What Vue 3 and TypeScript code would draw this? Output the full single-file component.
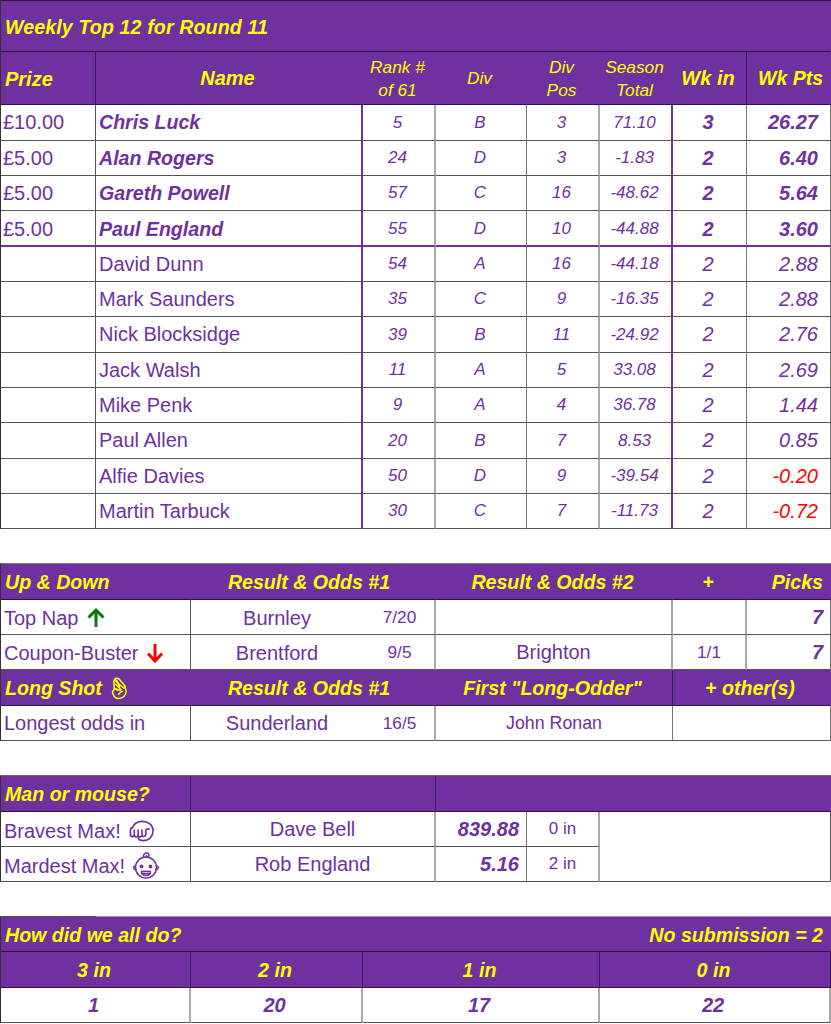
<script setup lang="ts">
interface Row {
  prize: string
  name: string
  rank: string
  div: string
  pos: string
  total: string
  wk: string
  pts: string
}

const rows: Row[] = [
  { prize: '£10.00', name: 'Chris Luck', rank: '5', div: 'B', pos: '3', total: '71.10', wk: '3', pts: '26.27' },
  { prize: '£5.00', name: 'Alan Rogers', rank: '24', div: 'D', pos: '3', total: '-1.83', wk: '2', pts: '6.40' },
  { prize: '£5.00', name: 'Gareth Powell', rank: '57', div: 'C', pos: '16', total: '-48.62', wk: '2', pts: '5.64' },
  { prize: '£5.00', name: 'Paul England', rank: '55', div: 'D', pos: '10', total: '-44.88', wk: '2', pts: '3.60' },
  { prize: '', name: 'David Dunn', rank: '54', div: 'A', pos: '16', total: '-44.18', wk: '2', pts: '2.88' },
  { prize: '', name: 'Mark Saunders', rank: '35', div: 'C', pos: '9', total: '-16.35', wk: '2', pts: '2.88' },
  { prize: '', name: 'Nick Blocksidge', rank: '39', div: 'B', pos: '11', total: '-24.92', wk: '2', pts: '2.76' },
  { prize: '', name: 'Jack Walsh', rank: '11', div: 'A', pos: '5', total: '33.08', wk: '2', pts: '2.69' },
  { prize: '', name: 'Mike Penk', rank: '9', div: 'A', pos: '4', total: '36.78', wk: '2', pts: '1.44' },
  { prize: '', name: 'Paul Allen', rank: '20', div: 'B', pos: '7', total: '8.53', wk: '2', pts: '0.85' },
  { prize: '', name: 'Alfie Davies', rank: '50', div: 'D', pos: '9', total: '-39.54', wk: '2', pts: '-0.20' },
  { prize: '', name: 'Martin Tarbuck', rank: '30', div: 'C', pos: '7', total: '-11.73', wk: '2', pts: '-0.72' },
]

const isWinner = (i: number): boolean => i < 4
const isNegative = (r: Row): boolean => r.pts.startsWith('-')
const counts = [
  { label: '3 in', value: '1' },
  { label: '2 in', value: '20' },
  { label: '1 in', value: '17' },
  { label: '0 in', value: '22' },
]
</script>

<template>
  <main class="page">
    <section class="grid top">
      <div class="cell head title span-all">Weekly Top 12 for Round 11</div>
      <div class="cell head big lift line-dark">Prize</div>
      <div class="cell head big center no-line">Name</div>
      <div class="cell head small center no-line">Rank #<br />of 61</div>
      <div class="cell head small center no-line">Div</div>
      <div class="cell head small center no-line">Div<br />Pos</div>
      <div class="cell head small center no-line">Season<br />Total</div>
      <div class="cell head big center line-dark">Wk in</div>
      <div class="cell head big right wkpts">Wk Pts</div>
      <template v-for="(r, i) in rows" :key="r.name">
        <div class="cell body first prize" :class="{ divider: i === 3 }">{{ r.prize }}</div>
        <div class="cell body name line-purple" :class="{ win: isWinner(i), divider: i === 3 }">{{ r.name }}</div>
        <div class="cell sm center thick" :class="{ divider: i === 3 }">{{ r.rank }}</div>
        <div class="cell sm center" :class="{ divider: i === 3 }">{{ r.div }}</div>
        <div class="cell sm center thick" :class="{ divider: i === 3 }">{{ r.pos }}</div>
        <div class="cell sm center line-purple" :class="{ divider: i === 3 }">{{ r.total }}</div>
        <div class="cell body it center shift" :class="{ win: isWinner(i), divider: i === 3 }">{{ r.wk }}</div>
        <div class="cell body it right pts" :class="{ win: isWinner(i), neg: isNegative(r), divider: i === 3 }">{{ r.pts }}</div>
      </template>
    </section>

    <section class="grid updown">
      <div class="cell head med no-line">Up &amp; Down</div>
      <div class="cell head med center no-line odds-title">Result &amp; Odds #1</div>
      <div class="cell head med center no-line">Result &amp; Odds #2</div>
      <div class="cell head med center no-line">+</div>
      <div class="cell head med right">Picks</div>

      <div class="cell body first nudge">
        Top Nap
        <svg class="arrow" viewBox="0 0 20 22" width="20" height="22"><path d="M10 20V3M2.500 10.500 10 3l7.500 7.500" fill="none" stroke="#008000" stroke-width="3" /></svg>
      </div>
      <div class="cell pair thick">
        <span class="team nudge">Burnley</span><span class="odds">7/20</span>
      </div>
      <div class="cell thick"></div>
      <div class="cell thick"></div>
      <div class="cell body it win right">7</div>

      <div class="cell body first nudge">
        Coupon-Buster
        <svg class="arrow down" viewBox="0 0 20 22" width="20" height="22"><path d="M10 2v17M3 11.500 10 19l7-7.500" fill="none" stroke="#f00" stroke-width="3" /></svg>
      </div>
      <div class="cell pair thick">
        <span class="team nudge">Brentford</span><span class="odds">9/5</span>
      </div>
      <div class="cell body center thick">Brighton</div>
      <div class="cell odds center thick">1/1</div>
      <div class="cell body it win right">7</div>

      <div class="cell head med no-line">
        Long Shot
        <svg class="fingers" viewBox="0 0 18 24" width="17" height="23" fill="none" stroke="#ff0" stroke-width="1.600" stroke-linejoin="round" stroke-linecap="round">
          <path d="M3.500 13 3 5C2.800 2.500 5.500 2 6.200 4l2.800 6" />
          <path d="M5 7.500 10.500 13M3.500 3 12.500 11c1.500 1.300 3.400-.2 2.300-1.700L8.500 2C7.500.8 5 1 4 2" />
          <path d="M3.500 13c-1.800 1-2.200 2.500-1.500 4.500 1 3 3 5 6 5 4.500 0 8-3 8-7.500 0-1.700-.7-3.300-1.700-5" />
          <path d="M3.500 13c1.200-1 2.700-.8 3.500.5M6.500 14c1-1 2.500-1 3.300.2M8 18c1-1.200 2.500-2.500 4-3" />
        </svg>
      </div>
      <div class="cell head med center no-line odds-title">Result &amp; Odds #1</div>
      <div class="cell head med center line-dark">First "Long-Odder"</div>
      <div class="cell head med center others">+ other(s)</div>

      <div class="cell body first">Longest odds in</div>
      <div class="cell pair thick">
        <span class="team">Sunderland</span><span class="odds">16/5</span>
      </div>
      <div class="cell ronan center">John Ronan</div>
      <div class="cell others"></div>
    </section>

    <section class="grid mouse">
      <div class="cell head med line-dark">Man or mouse?</div>
      <div class="cell head line-dark"></div>
      <div class="cell head mouse-head"></div>

      <div class="cell body first label">
        Bravest Max!
        <svg class="face" viewBox="0 0 26 22" width="25" height="22" fill="none" stroke="#7030a0" stroke-width="1.700" stroke-linecap="round" stroke-linejoin="round">
          <path d="M3.500 7.500C5 3.500 9 1 14 1c6 0 11 3.500 11 9.500 0 6-4 10.500-10 10.500-3 0-5-1-5.500-3" />
          <path d="M3.500 7.500C2 7.500 1.500 9 1.500 10.500V15c0 2.500 4 2.500 4 0v-5M5.500 15c0 3 4 3 4 0v-5M9.500 15c0 3 4 3 4 0v-5M13.500 15c0 2.500 4 2 4 0v-4.500c0-1.500 1.500-2 3.500-1.500" />
        </svg>
      </div>
      <div class="cell body center thick">Dave Bell</div>
      <div class="cell body it win right">839.88</div>
      <div class="cell sm-up center thick">0 in</div>
      <div class="cell blank"></div>

      <div class="cell body first label">
        Mardest Max!
        <svg class="face" viewBox="0 0 26 28" width="26" height="28" fill="none" stroke="#7030a0" stroke-width="1.500" stroke-linecap="round" stroke-linejoin="round">
          <circle cx="13" cy="15.500" r="10.500" />
          <path d="M10.500 5.300c-.5-2.500 1-4.300 3.500-4.300 2 0 3 2.500 1 3.500-1 .4-1.700-.2-1.700-1" />
          <path d="M2.500 14c-1.500 0-2 1-1.800 2 .2 1 1 1.700 2.200 1.500M23.500 14c1.500 0 2 1 1.800 2-.2 1-1 1.700-2.200 1.500" />
          <path d="M8.500 19.500c1.500-.5 7.500-.5 9 0 .3 2.500-1.500 4-4.500 4s-4.800-1.500-4.500-4ZM9 21.500h8" />
          <circle cx="8.500" cy="14.500" r="1.200" fill="#7030a0" />
          <circle cx="17.500" cy="14.500" r="1.200" fill="#7030a0" />
        </svg>
      </div>
      <div class="cell body center thick">Rob England</div>
      <div class="cell body it win right">5.16</div>
      <div class="cell sm-up center thick">2 in</div>
    </section>

    <section class="grid summary">
      <div class="cell head med wide-head no-line">
        <span>How did we all do?</span><span>No submission = 2</span>
      </div>
      <div v-for="c in counts" :key="c.label" class="cell head med center line-dark">{{ c.label }}</div>
      <div v-for="c in counts" :key="c.value" class="cell body it win center shift thick">{{ c.value }}</div>
    </section>
  </main>
</template>

<style scoped>
.page {
  width: 831px;
  height: 1024px;
  overflow: hidden;
  background: #fff;
  color: #7030a0;
  font-family: "Liberation Sans", Arial, sans-serif;
  display: flex;
  flex-direction: column;
  gap: 34px;
}
.grid {
  display: grid;
  width: 831px;
  box-sizing: border-box;
  border-top: 1px solid #2d1a3d;
  border-left: 1px solid #333;
}
.top {
  grid-template-columns: 95px 267px 73px 91px 73px 73px 74px 84px;
  grid-template-rows: 51px 53px 36px 35px 35px 36px 35px 35px 36px 35px 35px 36px 35px 35px;
}
.updown {
  grid-template-columns: 190px 245px 237px 74px 84px;
  grid-template-rows: 36px 35px 35px 36px 35px;
  border-top-color: #777;
}
.mouse {
  grid-template-columns: 190px 245px 91px 73px 231px;
  grid-template-rows: 36px 35px 35px;
  border-top-color: #666;
}
.summary {
  grid-template-columns: 190px 172px 237px 231px;
  grid-template-rows: 35px 36px 35px;
  border-top-color: #a98ac0;
}
.cell {
  box-sizing: border-box;
  display: flex;
  align-items: center;
  padding: 0 3px;
  border-right: 1px solid #777;
  border-bottom: 1px solid #555;
  min-width: 0;
  white-space: nowrap;
}
.first {
  border-right-color: #555;
}
.prize {
  padding-left: 2px;
}
.thick {
  border-right: 2px solid #aaa;
}
.head {
  background: #7030a0;
  color: #ff0;
  font-style: italic;
  font-weight: 700;
  border-bottom-color: #2d1245;
  border-right-color: #7030a0;
  padding-left: 4px;
}
.title {
  font-size: 19.600px;
  letter-spacing: 0.120px;
  padding-top: 2px;
}
.span-all {
  grid-column: 1 / -1;
}
.big {
  font-size: 20px;
}
.lift {
  padding-top: 2px;
}
.med {
  font-size: 19.600px;
  padding-top: 2px;
}
.small {
  font-size: 17.300px;
  font-weight: 400;
  line-height: 23px;
  text-align: center;
  padding-top: 1px;
}
.no-line {
  border-right-color: #7030a0;
}
.line-dark {
  border-right-color: #3a1a55;
}
.wkpts {
  font-size: 19.500px;
}
.center {
  justify-content: center;
  text-align: center;
}
.head.center {
  padding-left: 2px;
  padding-right: 5px;
}
.head.odds-title {
  padding-left: 0;
  padding-right: 8px;
}
.shift {
  padding-right: 6px;
}
.right {
  justify-content: flex-end;
  padding-right: 7px;
}
.pts {
  padding-right: 12px;
}
.body {
  font-size: 20px;
}
.it {
  font-style: italic;
}
.win {
  font-weight: 700;
}
.name {
  padding-left: 3px;
}
.name.win {
  font-style: italic;
  font-size: 19.600px;
}
.neg {
  color: #f00;
}
.sm {
  font-size: 17px;
  font-style: italic;
  padding-right: 5px;
}
.sm-up {
  font-size: 17px;
}
.ronan {
  font-size: 17.800px;
  border-right: 1px solid #777;
}
.line-purple {
  border-right: 2px solid #7030a0;
}
.divider {
  border-bottom: 2px solid #7030a0;
  padding-top: 2px;
}
.nudge {
  padding-top: 2px;
}
.label {
  padding-top: 4px;
}
.pair {
  display: grid;
  grid-template-columns: 172px 73px;
  padding: 0;
  justify-items: center;
}
.team {
  font-size: 20px;
}
.odds {
  font-size: 17.300px;
}
.others {
  grid-column: span 2;
}
.arrow {
  margin-left: 7px;
}
.arrow.down {
  margin-left: 6px;
}
.fingers {
  margin-left: 9px;
}
.face {
  margin-left: 8px;
}
.mouse-head {
  grid-column: span 3;
}
.blank {
  grid-row: span 2;
  border-right-color: #555;
}
.wide-head {
  grid-column: 1 / -1;
  justify-content: space-between;
  padding-right: 7px;
  padding-top: 3px;
  position: relative;
}
.wide-head::before {
  content: "";
  position: absolute;
  top: -1px;
  left: -1px;
  width: 96px;
  height: 1px;
  background: #555;
}
</style>

<style>
html,
body {
  margin: 0;
  background: #fff;
}
</style>
